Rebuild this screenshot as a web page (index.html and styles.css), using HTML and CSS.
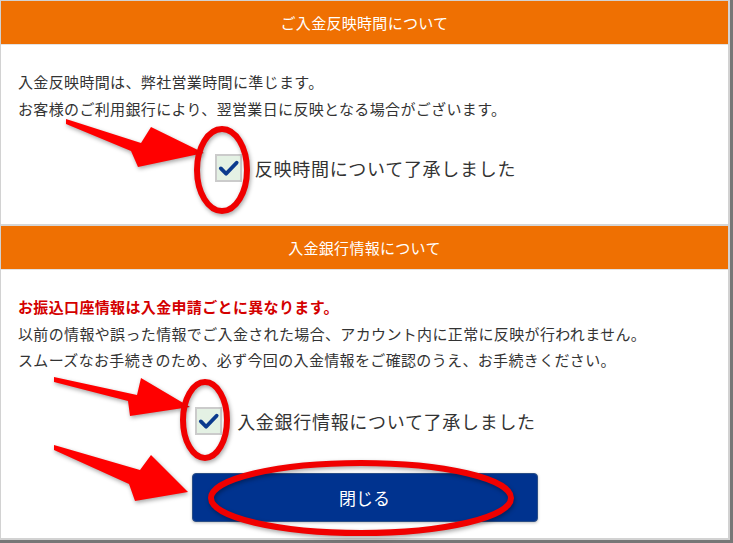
FILE: index.html
```html
<!DOCTYPE html>
<html lang="ja">
<head>
  <meta charset="UTF-8">
  <title>入金確認</title>
  <link rel="stylesheet" href="styles.css">
</head>
<body>

  <div class="modal">
    <div class="modal-head">ご入金反映時間について</div>
    <div class="modal-body first">
      <p>入金反映時間は、弊社営業時間に準じます。</p>
      <p>お客様のご利用銀行により、翌営業日に反映となる場合がございます。</p>
      <label class="agree">
        <span class="check"><svg viewBox="0 0 24 24"><path d="M4 12.5 L9.5 18 L20.5 6.5" /></svg></span>
        反映時間について了承しました
      </label>
    </div>

    <div class="modal-head second">入金銀行情報について</div>
    <div class="modal-body">
      <p class="warn">お振込口座情報は入金申請ごとに異なります。</p>
      <p>以前の情報や誤った情報でご入金された場合、アカウント内に正常に反映が行われません。</p>
      <p>スムーズなお手続きのため、必ず今回の入金情報をご確認のうえ、お手続きください。</p>
      <label class="agree shift">
        <span class="check"><svg viewBox="0 0 24 24"><path d="M4 12.5 L9.5 18 L20.5 6.5" /></svg></span>
        入金銀行情報について了承しました
      </label>
      <button class="close-btn">閉じる</button>
    </div>
  </div>

  <!-- red annotations drawn over the screenshot -->
  <svg class="marks" width="733" height="543" viewBox="0 0 733 543">
    <g class="arrows">
      <polygon points="66,119 141,143 151,127 204,153 138,167 131,151 66,124" />
      <polygon points="54,377 137,395 141,378 190,407 130,416 128,401 54,382" />
      <polygon points="54,445 140,470 151,455 188,492 135,501 129,484 54,450" />
    </g>
    <g class="rings">
      <ellipse cx="222" cy="170" rx="25" ry="41" />
      <ellipse cx="205" cy="420" rx="22" ry="38" />
      <ellipse cx="361" cy="498" rx="150" ry="35" />
    </g>
  </svg>

</body>
</html>
```

FILE: styles.css
```css
* {
  box-sizing: border-box;
}

html, body {
  margin: 0;
  padding: 0;
}

body {
  font-family: "Noto Sans CJK JP", "Noto Sans", sans-serif;
  background: #777;
  width: 733px;
  height: 543px;
  overflow: hidden;
  position: relative;
}

.modal {
  width: 730px;
  height: 540px;
  background: #fff;
  border: 1px solid #d2d2d2;
  border-right-width: 2px;
  border-bottom-width: 2px;
  display: flex;
  flex-direction: column;
}

.modal-head {
  height: 44px;
  line-height: 44px;
  background: #ef7002;
  color: #fff;
  text-align: center;
  font-size: 15px;
  letter-spacing: 0.3px;
  border-bottom: 1px solid #e2e2e2;
  flex-shrink: 0;
}

.modal-head.second {
  border-top: 2px solid #d6d6d6;
  height: 46px;
}

.modal-body {
  padding: 24px 17px 0;
  color: #333;
  font-size: 15px;
  display: flex;
  flex-direction: column;
  flex: 1;
}

.modal-body.first {
  height: 179px;
  flex: none;
}

.modal-body p {
  margin: 0;
  line-height: 26.5px;
  letter-spacing: 0.35px;
}

.modal-body .warn {
  color: #d40000;
  font-weight: bold;
}

.agree {
  display: flex;
  align-items: center;
  justify-content: center;
  gap: 13px;
  margin-top: 31px;
  font-size: 18px;
  letter-spacing: 0.7px;
  color: #333;
  height: 30px;
  padding-left: 2px;
}

.agree.shift {
  margin-top: 32px;
  gap: 15px;
}

.check {
  width: 27px;
  height: 28px;
  background: #e4f1e4;
  border: 2px solid #cbcbcb;
  display: flex;
  align-items: center;
  justify-content: center;
}

.check svg {
  width: 24px;
  height: 24px;
  fill: none;
  stroke: #0b3a8e;
  stroke-width: 4;
  stroke-linecap: round;
  stroke-linejoin: round;
}

.close-btn {
  align-self: center;
  margin-top: 37px;
  width: 346px;
  height: 49px;
  background: #00338f;
  border: 1px solid #2a4e86;
  border-radius: 4px;
  color: #fff;
  font-family: inherit;
  font-size: 17px;
  box-shadow: 0 1px 3px rgba(0, 0, 0, 0.25);
}

.marks {
  position: absolute;
  top: 0;
  left: 0;
  pointer-events: none;
}

.arrows polygon {
  fill: #ff0000;
  filter: drop-shadow(1px 2px 2px rgba(0, 0, 0, 0.35));
}

.rings ellipse {
  fill: none;
  stroke: #f00000;
  stroke-width: 6;
  filter: drop-shadow(1px 2px 2px rgba(0, 0, 0, 0.35));
}
```
